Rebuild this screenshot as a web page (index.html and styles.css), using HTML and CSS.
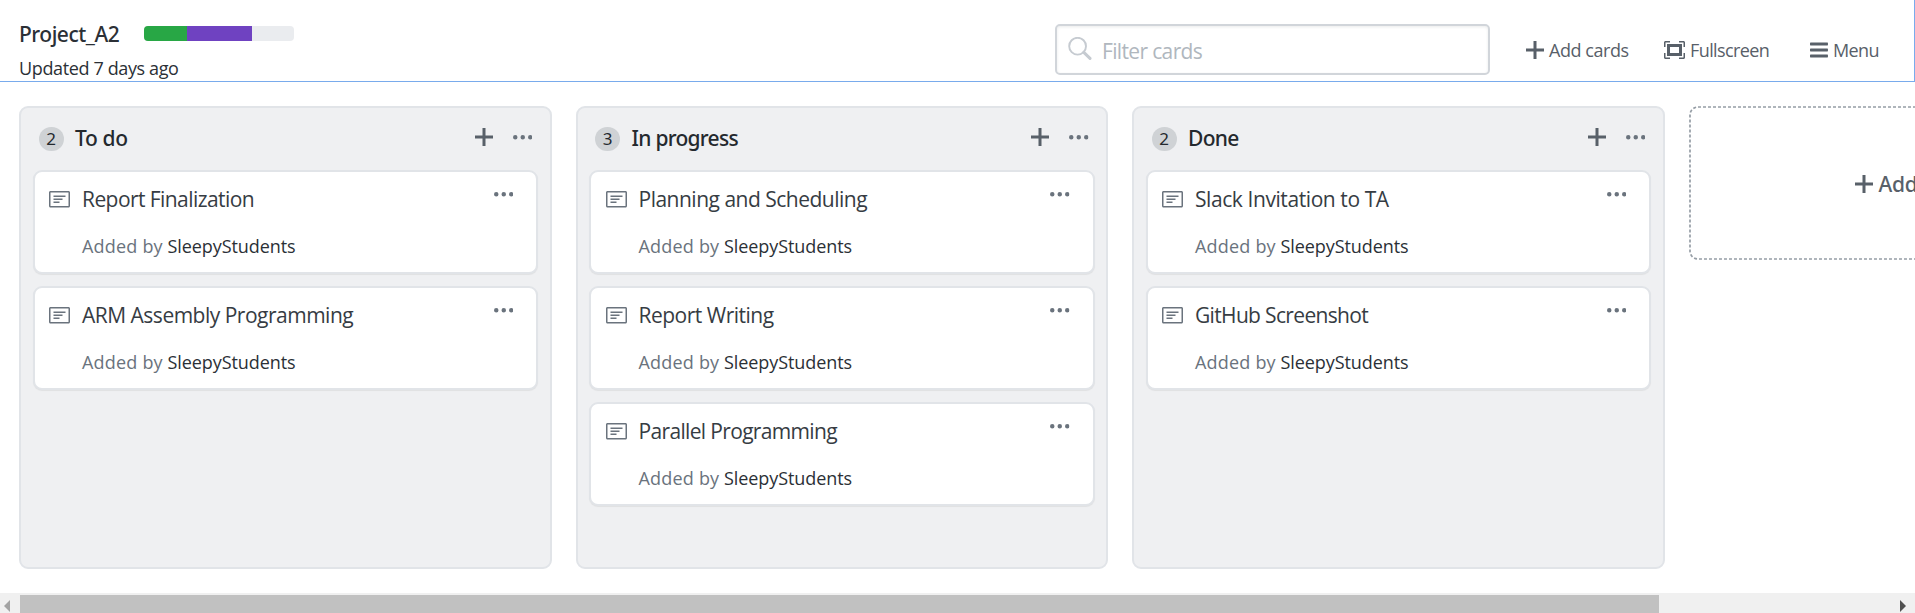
FILE: index.html
```html
<!DOCTYPE html>
<html lang="en">
<head>
<meta charset="utf-8">
<title>Project_A2</title>
<link rel="stylesheet" href="styles.css">
</head>
<body>
<svg class="sprite" aria-hidden="true">
  <symbol id="plus" viewBox="0 0 12 16"><path d="M12 9H7v5H5V9H0V7h5V2h2v5h5v2z"/></symbol>
  <symbol id="kebab" viewBox="0 0 13 16"><path d="M1.5 9a1.5 1.5 0 100-3 1.5 1.5 0 000 3zM6.5 9a1.5 1.5 0 100-3 1.5 1.5 0 000 3zM11.5 9a1.5 1.5 0 100-3 1.5 1.5 0 000 3z"/></symbol>
  <symbol id="note" viewBox="0 0 14 16"><path fill-rule="evenodd" d="M3 10h4V9H3v1zm0-2h6V7H3v1zm0-2h8V5H3v1zm10 6H1V3h12v9zM1 2c-.55 0-1 .45-1 1v9c0 .55.45 1 1 1h12c.55 0 1-.45 1-1V3c0-.55-.45-1-1-1H1z"/></symbol>
  <symbol id="full" viewBox="0 0 14 16"><path fill-rule="evenodd" d="M13 10h1v3c0 .547-.453 1-1 1h-3v-1h3v-3zM1 10H0v3c0 .547.453 1 1 1h3v-1H1v-3zm0-7h3V2H1c-.547 0-1 .453-1 1v3h1V3zm1 1h10v8H2V4zm2 6h6V6H4v4zm6-8v1h3v3h1V3c0-.547-.453-1-1-1h-3z"/></symbol>
  <symbol id="bars" viewBox="0 0 12 16"><path d="M11.41 9H.59C0 9 0 8.59 0 8c0-.59 0-1 .59-1H11.4c.59 0 .59.41.59 1 0 .59 0 1-.59 1h.01zm0-4H.59C0 5 0 4.59 0 4c0-.59 0-1 .59-1H11.4c.59 0 .59.41.59 1 0 .59 0 1-.59 1h.01zM.59 11H11.4c.59 0 .59.41.59 1 0 .59 0 1-.59 1H.59C0 13 0 12.59 0 12c0-.59 0-1 .59-1z"/></symbol>
</svg>
<header class="header">
  <div class="project">
    <div class="project-top">
      <h1 class="project-name">Project_A2</h1>
      <div class="progress"><span class="progress-done"></span><span class="progress-doing"></span></div>
    </div>
    <div class="updated">Updated 7 days ago</div>
  </div>
  <div class="filter">
    <svg class="search" viewBox="0 0 24 24"><circle cx="9.6" cy="9.2" r="8.4"/><path d="M15.8 15.4l6.2 6"/></svg>
    <span class="placeholder">Filter cards</span>
  </div>
  <nav class="actions">
    <a class="action action-add"><svg class="i12"><use href="#plus"/></svg><span>Add cards</span></a>
    <a class="action action-full"><svg class="i14"><use href="#full"/></svg><span>Fullscreen</span></a>
    <a class="action action-menu"><svg class="i12"><use href="#bars"/></svg><span>Menu</span></a>
  </nav>
</header>
<main class="board">
  <section class="column">
    <div class="column-head"><span class="count">2</span><h2 class="column-name wide">To do</h2><svg class="i12"><use href="#plus"/></svg><svg class="i13"><use href="#kebab"/></svg></div>
    <article class="card"><svg class="i14"><use href="#note"/></svg><div class="card-body"><p class="card-title snug">Report Finalization</p><p class="by"><span>Added by</span> <b>SleepyStudents</b></p></div><svg class="i13"><use href="#kebab"/></svg></article>
    <article class="card"><svg class="i14"><use href="#note"/></svg><div class="card-body"><p class="card-title">ARM Assembly Programming</p><p class="by"><span>Added by</span> <b>SleepyStudents</b></p></div><svg class="i13"><use href="#kebab"/></svg></article>
  </section>
  <section class="column">
    <div class="column-head"><span class="count">3</span><h2 class="column-name">In progress</h2><svg class="i12"><use href="#plus"/></svg><svg class="i13"><use href="#kebab"/></svg></div>
    <article class="card"><svg class="i14"><use href="#note"/></svg><div class="card-body"><p class="card-title">Planning and Scheduling</p><p class="by"><span>Added by</span> <b>SleepyStudents</b></p></div><svg class="i13"><use href="#kebab"/></svg></article>
    <article class="card"><svg class="i14"><use href="#note"/></svg><div class="card-body"><p class="card-title">Report Writing</p><p class="by"><span>Added by</span> <b>SleepyStudents</b></p></div><svg class="i13"><use href="#kebab"/></svg></article>
    <article class="card"><svg class="i14"><use href="#note"/></svg><div class="card-body"><p class="card-title tight">Parallel Programming</p><p class="by"><span>Added by</span> <b>SleepyStudents</b></p></div><svg class="i13"><use href="#kebab"/></svg></article>
  </section>
  <section class="column">
    <div class="column-head"><span class="count">2</span><h2 class="column-name">Done</h2><svg class="i12"><use href="#plus"/></svg><svg class="i13"><use href="#kebab"/></svg></div>
    <article class="card"><svg class="i14"><use href="#note"/></svg><div class="card-body"><p class="card-title loose">Slack Invitation to TA</p><p class="by"><span>Added by</span> <b>SleepyStudents</b></p></div><svg class="i13"><use href="#kebab"/></svg></article>
    <article class="card"><svg class="i14"><use href="#note"/></svg><div class="card-body"><p class="card-title tight">GitHub Screenshot</p><p class="by"><span>Added by</span> <b>SleepyStudents</b></p></div><svg class="i13"><use href="#kebab"/></svg></article>
  </section>
  <section class="add-column">
    <svg class="dashes"><rect x="1" y="1" width="530" height="152" rx="8"/></svg>
    <svg class="i12"><use href="#plus"/></svg><span>Add</span>
  </section>
</main>
<footer class="scrollbar">
  <svg class="arrow" viewBox="0 0 20 20"><path fill="#a3a3a3" d="M10 7v12L4 13z"/></svg>
  <div class="thumb"></div>
  <svg class="arrow" viewBox="0 0 20 20"><path fill="#505050" d="M5 7v12l6-6z"/></svg>
</footer>
</body>
</html>
```
FILE: styles.css
```css
* { box-sizing: border-box; }
body {
  margin: 0;
  width: 1915px;
  height: 613px;
  overflow: hidden;
  display: flex;
  flex-direction: column;
  background: #fff;
  color: #2b3036;
  font-family: "Open Sans", "Noto Sans", sans-serif;
  font-size: 18px;
  line-height: 24px;
}
h1, h2, p { margin: 0; }
svg { display: block; flex: none; fill: currentColor; }
.sprite { position: absolute; width: 0; height: 0; }
.i12 { width: 18px; height: 24px; }
.i13 { width: 19.5px; height: 24px; }
.i14 { width: 21px; height: 24px; }

.header {
  height: 82px;
  flex: none;
  display: flex;
  align-items: flex-start;
  border-bottom: 1px solid #79abec;
  border-right: 1px solid #79abec;
}
.project { width: 1036px; margin-left: 19px; padding-top: 18px; }
.project-top { display: flex; height: 32px; }
.project-name {
  width: 125px;
  font: 500 21px/32px "Noto Sans", sans-serif;
  letter-spacing: -0.48px;
}
.progress {
  display: flex;
  width: 150px;
  height: 15px;
  margin-top: 8px;
  border-radius: 4px;
  overflow: hidden;
  background: #eaecef;
}
.progress-done { width: 43px; background: #28a745; }
.progress-doing { width: 65px; background: #6f42c1; }
.updated { margin-top: 6px; letter-spacing: -0.37px; }
.filter {
  width: 435px;
  height: 51px;
  margin-top: 24px;
  display: flex;
  align-items: center;
  padding-left: 11px;
  border: 2px solid #d1d5da;
  border-radius: 5px;
  box-shadow: inset 0 1px 3px rgba(27, 31, 35, .09);
}
.search { width: 24px; height: 24px; margin-top: -1px; fill: none; stroke: #c6cbd1; }
.search circle { stroke-width: 1.9; }
.search path { stroke-width: 3; stroke-linecap: round; }
.placeholder {
  margin: 3px 0 0 10px;
  color: #b0b7be;
  font-size: 21px;
  letter-spacing: -0.65px;
}
.actions { display: flex; padding: 38px 0 0 36px; color: #586069; }
.action { display: flex; gap: 4px; letter-spacing: -0.45px; }
.action-add { width: 138px; gap: 5px; }
.action-full { width: 146px; gap: 5px; letter-spacing: -0.6px; }
.action-menu { gap: 5px; letter-spacing: -0.6px; }

.board {
  flex: none;
  display: flex;
  gap: 24px;
  height: 511px;
  overflow: hidden;
  padding: 24px 0 24px 19px;
}
.column {
  flex: none;
  width: 532.5px;
  height: 463px;
  padding: 0 12px;
  border: 2px solid #e1e4e8;
  border-radius: 9px;
  background: #eff0f2;
}
.column-head {
  height: 62px;
  display: flex;
  padding: 17px 5.5px 0 5.5px;
  color: #586069;
}
.count {
  width: 25px;
  height: 24px;
  margin-top: 2px;
  border-radius: 12px;
  background: #cfd2d5;
  color: #24292e;
  font: 400 17px/24px "Noto Sans", sans-serif;
  text-align: center;
}
.column-name {
  flex: 1;
  margin-left: 11.5px;
  color: #24292e;
  font: 500 21px/27px "Noto Sans", sans-serif;
  letter-spacing: -0.72px;
}
.wide { letter-spacing: -0.35px; }
.column-head .i13 { margin-left: 20px; color: #6a737d; margin-top: 1px; }
.card {
  display: flex;
  height: 104px;
  margin: 0 -0.5px 12px;
  padding: 16px 23px 0 14.5px;
  border: 2px solid #e1e4e8;
  border-radius: 9px;
  background: #fff;
  box-shadow: 0 1px 1px rgba(27, 31, 35, .07);
  color: #6a737d;
}
.card > .i13 { margin-top: -5px; }
.card-body { flex: 1; margin: -1px 0 0 12px; }
.card-title {
  color: #363c43;
  font-size: 21px;
  line-height: 24px;
  letter-spacing: -0.5px;
}
.loose { letter-spacing: -0.42px; }
.snug { letter-spacing: -0.57px; }
.tight { letter-spacing: -0.66px; }
.by { margin-top: 23px; }
.by span { letter-spacing: 0.2px; }
.by b { font-weight: 400; color: #2b3036; letter-spacing: -0.08px; }

.add-column {
  position: relative;
  flex: none;
  display: flex;
  gap: 6px;
  width: 532px;
  height: 154px;
  padding: 66px 0 0 166px;
  color: #586069;
  font: 500 21px/24px "Noto Sans", sans-serif;
  letter-spacing: -0.3px;
}
.dashes {
  position: absolute;
  inset: 0;
  width: 532px;
  height: 154px;
  fill: none;
  stroke: #959da5;
  stroke-width: 1.7;
  stroke-dasharray: 3 2;
}

.scrollbar { flex: none; display: flex; height: 20px; background: #f0f0f0; }
.arrow { width: 20px; height: 20px; }
.thumb { width: 1639px; height: 18px; margin: 2px 236px 0 0; background: #c1c1c1; }
```
